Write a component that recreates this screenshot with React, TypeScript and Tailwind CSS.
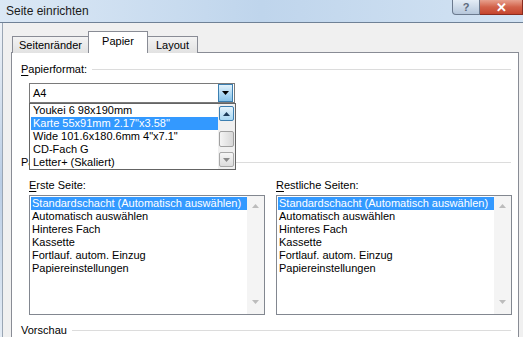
import React from "react";

const trays = [
  "Standardschacht (Automatisch auswählen)",
  "Automatisch auswählen",
  "Hinteres Fach",
  "Kassette",
  "Fortlauf. autom. Einzug",
  "Papiereinstellungen",
];

const formats = [
  "Youkei 6 98x190mm",
  'Karte 55x91mm 2.17"x3.58"',
  'Wide 101.6x180.6mm 4"x7.1"',
  "CD-Fach G",
  "Letter+ (Skaliert)",
];

function Tri({ up, color = "#000" }: { up?: boolean; color?: string }) {
  return (
    <svg width="7" height="4" viewBox="0 0 7 4">
      <path d={up ? "M0 4 L3.5 0 L7 4 Z" : "M0 0 L7 0 L3.5 4 Z"} fill={color} />
    </svg>
  );
}

function GroupLabel({ text, u = "" }: { text: string; u?: string }) {
  return (
    <div className="flex h-[15px] items-center pl-[9px] pr-[7px]">
      <span className="whitespace-nowrap">
        {u && <span className="underline underline-offset-2">{u}</span>}
        {text.slice(u.length)}
      </span>
      <div className="ml-[5px] h-px flex-1 bg-[#dcdcdc]" />
    </div>
  );
}

function TrayList({ label, u }: { label: string; u: string }) {
  return (
    <div className="flex flex-col">
      <div className="flex h-[15px] items-center">
        <span>
          <span className="underline underline-offset-2">{u}</span>
          {label.slice(u.length)}
        </span>
      </div>
      <div className="mt-[2px] flex h-[120px] w-[236px] border border-[#828790] bg-white">
        <div className="flex-1 pl-px pt-px">
          {trays.map((t, i) => (
            <div
              key={t}
              className={
                i === 0
                  ? "h-[13px] whitespace-nowrap bg-[#3399ff] pl-px leading-[13px] text-white"
                  : "h-[13px] whitespace-nowrap pl-px leading-[13px]"
              }
            >
              {t}
            </div>
          ))}
        </div>
        <div className="flex w-[17px] flex-col items-center justify-between bg-[#f4f4f4] pb-[10px] pt-[8px]">
          <Tri up color="#bcbcbc" />
          <Tri color="#bcbcbc" />
        </div>
      </div>
    </div>
  );
}

export default function App() {
  return (
    <div className="relative h-[337px] w-[523px] overflow-hidden bg-[#f0f0f0] font-['Liberation_Sans',Arial,sans-serif] text-[11px] text-black">
      {/* title bar */}
      <div className="flex h-[22px] bg-gradient-to-r from-[#dbe8f5] via-[#bfd5ec] to-[#d3e3f3]">
        <div className="flex items-center pl-[6px] text-[12px] text-[#1a1a1a]">Seite einrichten</div>
        <div className="ml-auto flex self-start">
          <div className="flex h-[15px] w-[28px] items-center justify-center rounded-bl-[4px] border border-t-0 border-[#6b7a8e] bg-gradient-to-b from-[#e4edf6] to-[#b6c7db] text-[11px] font-bold leading-none text-[#5c6a7c]">
            ?
          </div>
          <div className="flex h-[15px] w-[43px] items-center justify-center border border-l-0 border-t-0 border-[#8a2c1f] bg-gradient-to-b from-[#e7a08d] via-[#d2624a] to-[#c5452e] text-[13px] font-bold leading-none text-white">
            ✕
          </div>
        </div>
      </div>
      <div className="h-px bg-[#6f8196]" />

      <div className="flex">
        <div className="h-[320px] w-[3px] border-r border-[#9aa6b4] bg-gradient-to-b from-[#eef2f7] via-[#b9cde5] to-[#e6edf5]" />
        <div className="flex-1 pl-[8px] pr-[4px]">
          {/* tabs */}
          <div className="flex h-[29px] items-end pl-px">
            <div className="relative top-px flex h-[17px] w-[77px] items-center justify-center border border-b-0 border-[#898c95] bg-gradient-to-b from-[#f3f3f3] to-[#e2e2e2]">
              Seitenränder
            </div>
            <div className="relative top-px z-10 -mx-px flex h-[22px] w-[60px] items-center justify-center border border-b-0 border-[#898c95] bg-white pb-[3px]">
              Papier
            </div>
            <div className="relative top-px flex h-[17px] w-[51px] items-center justify-center border border-b-0 border-[#898c95] bg-gradient-to-b from-[#f3f3f3] to-[#e2e2e2]">
              Layout
            </div>
          </div>

          {/* panel */}
          <div className="h-[300px] border border-b-0 border-[#898c95] bg-white pt-[9px]">
            <GroupLabel text="Papierformat:" u="P" />

            <div className="relative ml-[17px] mt-[6px] w-[206px]">
              <div className="flex h-[20px] items-center border border-[#7a7a7a] bg-white">
                <span className="flex-1 pl-[3px]">A4</span>
                <div className="mr-px flex h-[18px] w-[15px] items-center justify-center border border-[#3c7fb1] bg-gradient-to-b from-[#e3f2fb] via-[#b3dbf4] to-[#87c2e9]">
                  <Tri />
                </div>
              </div>
              {/* open dropdown list */}
              <div className="absolute left-0 top-full z-20 flex h-[67px] w-[207px] border border-[#646464] bg-white">
                <div className="flex-1 pl-px">
                  {formats.map((f, i) => (
                    <div
                      key={f}
                      className={
                        i === 1
                          ? "h-[13px] whitespace-nowrap bg-[#3399ff] pl-[2px] leading-[13px] text-white"
                          : "h-[13px] whitespace-nowrap pl-[2px] leading-[13px]"
                      }
                    >
                      {f}
                    </div>
                  ))}
                </div>
                <div className="flex w-[17px] flex-col bg-[#f0f0f0] px-px py-[2px]">
                  <div className="flex h-[15px] items-center justify-center rounded-[2px] border border-[#3c7fb1] bg-gradient-to-b from-[#e5f4fc] to-[#a9d8f3]">
                    <Tri up color="#1c3c5a" />
                  </div>
                  <div className="mt-[10px] h-[16px] rounded-[2px] border border-[#a0a0a0] bg-gradient-to-r from-[#f4f4f4] to-[#d8d8d8]" />
                  <div className="mt-auto flex h-[15px] items-center justify-center rounded-[2px] border border-[#a8a8a8] bg-gradient-to-b from-[#f6f6f6] to-[#dcdcdc]">
                    <Tri color="#8a8a8a" />
                  </div>
                </div>
              </div>
            </div>

            <div className="mt-[52px]">
              <GroupLabel text="Papierzufuhr" />
            </div>

            <div className="ml-[17px] mt-[8px] flex gap-[11px]">
              <TrayList label="Erste Seite:" u="E" />
              <TrayList label="Restliche Seiten:" u="R" />
            </div>

            <div className="mt-[8px]">
              <GroupLabel text="Vorschau" />
            </div>
          </div>
        </div>
      </div>
    </div>
  );
}
